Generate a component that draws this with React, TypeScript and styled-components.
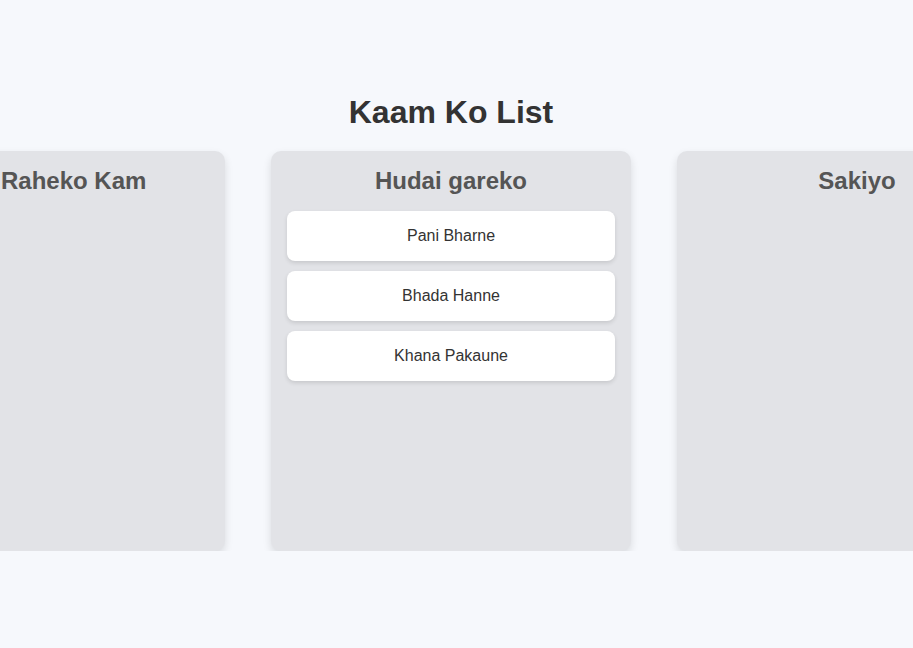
import React from "react";
import styled, { createGlobalStyle } from "styled-components";

const GlobalStyle = createGlobalStyle`
  html, body {
    margin: 0;
    padding: 0;
    background: #f6f8fc;
    font-family: "Liberation Sans", Arial, sans-serif;
    overflow: hidden;
  }
`;

const Page = styled.div`
  box-sizing: border-box;
  width: 100%;
  padding: 94px 11px 0 0;
  display: flex;
  flex-direction: column;
  align-items: center;
`;

const Heading = styled.h1`
  margin: 0 0 20px;
  font-size: 32px;
  font-weight: 700;
  color: #333333;
  text-align: center;
  line-height: 37px;
`;

const Board = styled.div`
  width: 100%;
  display: flex;
  justify-content: center;
  gap: 46px;
`;

const Column = styled.section`
  box-sizing: border-box;
  flex: 0 0 360px;
  height: 400px;
  padding: 16px;
  background: #e2e3e7;
  border-radius: 10px;
  box-shadow: 0 4px 8px rgba(0, 0, 0, 0.12);
  display: flex;
  flex-direction: column;
  gap: 10px;
`;

const ColumnTitle = styled.h2`
  margin: 0 0 6px;
  font-size: 24px;
  font-weight: 700;
  line-height: 28px;
  color: #555555;
  text-align: center;
  white-space: nowrap;
`;

const Card = styled.div`
  height: 50px;
  display: flex;
  align-items: center;
  justify-content: center;
  background: #ffffff;
  border-radius: 8px;
  box-shadow: 0 2px 4px rgba(0, 0, 0, 0.12);
  font-size: 16px;
  color: #333333;
`;

const columns = [
  { title: "Baki Raheko Kam", items: [] as string[] },
  { title: "Hudai gareko", items: ["Pani Bharne", "Bhada Hanne", "Khana Pakaune"] },
  { title: "Sakiyo", items: [] as string[] },
];

export default function App() {
  return (
    <>
      <GlobalStyle />
      <Page>
        <Heading>Kaam Ko List</Heading>
        <Board>
          {columns.map((c) => (
            <Column key={c.title}>
              <ColumnTitle>{c.title}</ColumnTitle>
              {c.items.map((i) => (
                <Card key={i}>{i}</Card>
              ))}
            </Column>
          ))}
        </Board>
      </Page>
    </>
  );
}
